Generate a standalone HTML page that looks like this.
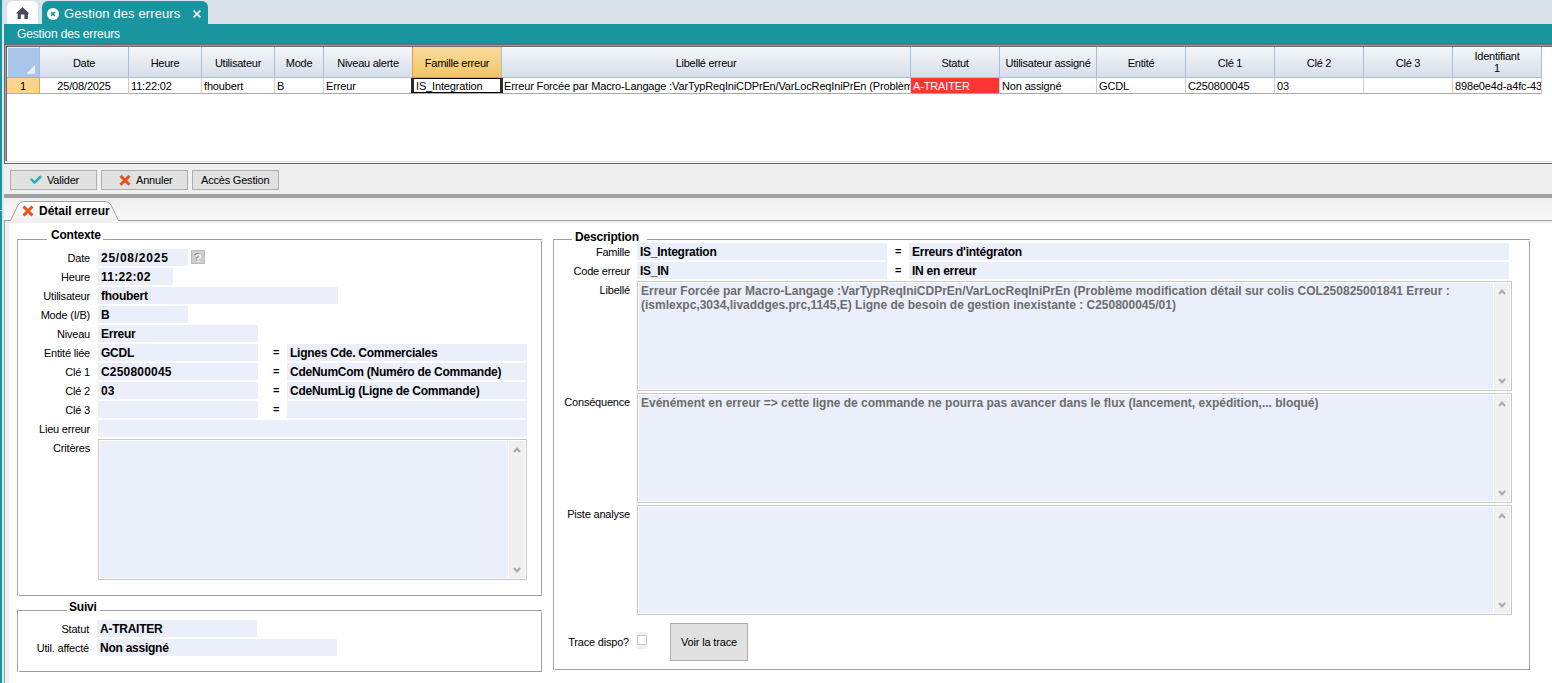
<!DOCTYPE html>
<html><head><meta charset="utf-8"><style>
*{margin:0;padding:0;box-sizing:border-box}
html,body{width:1552px;height:683px;overflow:hidden;background:#fff;font-family:"Liberation Sans",sans-serif;font-size:11px;color:#000}
div,span{position:absolute;white-space:nowrap}
.ttl{color:#fff}
.gh{top:47px;height:31px;background:linear-gradient(#ffffff 0,#ffffff 1px,#f3f6fa 1px,#d6dee9 100%);border-right:1px solid #a7bdd8;border-bottom:1px solid #a7bdd8;text-align:center;line-height:33px;font-size:11px;letter-spacing:-0.25px;overflow:hidden}
.gc{top:78px;height:16px;border-right:1px solid #cfcfcf;border-bottom:1px solid #a8a8a8;line-height:16px;font-size:11px;letter-spacing:-0.15px;padding-left:2px;overflow:hidden}
.btn{top:170px;height:20px;background:#e1e1e1;border:1px solid #adadad;font-size:11px;line-height:18px}
.gb{border:1px solid #a0a0a0}
.gbt{background:#fff;font-weight:bold;font-size:12px;letter-spacing:-0.2px;padding:0 2px;line-height:14px}
.lb{font-size:11px;letter-spacing:-0.2px;text-align:right;line-height:19px;height:17px}
.f{background:#eaeffa;height:17px;font-weight:bold;font-size:12px;letter-spacing:-0.25px;line-height:19px;padding-left:3px;overflow:hidden}
.ta{background:#eaeffa;border:1px solid #c8c8c8;box-shadow:inset 0 0 0 1px #fff;overflow:hidden}
.sb{top:1px;right:1px;bottom:1px;width:17px;background:#f0f0f0;border-left:1px solid #fff}
.sb svg{position:absolute;left:3px}
.num{letter-spacing:0.7px}
.eq{font-size:11px;font-weight:bold;line-height:17px}
.tat{left:3px;top:2px;font-weight:bold;font-size:12px;color:#6d6d6d;line-height:14px}
</style></head><body>
<div style="left:0px;top:0px;width:1552px;height:24px;background:#dbe3ea"></div>
<div style="left:0px;top:0px;width:2px;height:683px;background:#1995a0"></div>
<div style="left:2px;top:24px;width:2px;height:659px;background:#dfe7ee"></div>
<div style="left:0px;top:210px;width:2px;height:1px;background:#bde0e4"></div>
<div style="left:7px;top:1px;width:31px;height:23px;background:#fff;border-radius:6px 6px 0 0"></div>
<svg style="position:absolute;left:15px;top:6px" width="16" height="14" viewBox="0 0 16 14"><path d="M7.5 1 L14.4 7.6 L12.9 7.6 L12.9 12.9 L9.4 12.9 L9.4 8.6 L5.8 8.6 L5.8 12.9 L2.7 12.9 L2.7 7.6 L0.8 7.6 Z" fill="#474c5a"/></svg>
<div style="left:42px;top:1px;width:166px;height:23px;background:#1995a0;border-radius:6px 6px 0 0"></div>
<svg style="position:absolute;left:47px;top:8px" width="12" height="12" viewBox="0 0 12 12"><circle cx="6" cy="6" r="6" fill="#fff"/><path d="M4.1 4.1 L7.9 7.9 M7.9 4.1 L4.1 7.9" stroke="#1995a0" stroke-width="1.5"/></svg>
<div class="ttl" style="left:64px;top:5px;font-size:13px;line-height:17px;letter-spacing:0.12px">Gestion des erreurs</div>
<svg style="position:absolute;left:193px;top:10px" width="8" height="8" viewBox="0 0 8 8"><path d="M0.6 0.6 L7.4 7.4 M7.4 0.6 L0.6 7.4" stroke="#fff" stroke-width="1.5"/></svg>
<div style="left:4px;top:24px;width:1548px;height:20px;background:#1995a0"></div>
<div class="ttl" style="left:17px;top:26px;font-size:12px;line-height:16px;letter-spacing:-0.13px">Gestion des erreurs</div>
<div style="left:4px;top:44px;width:1548px;height:120px;background:#fff;border-top:1px solid #696969;border-left:1px solid #696969;border-bottom:1px solid #696969;box-shadow:inset 0 -1px 0 #fff,inset 0 -2px 0 #e3e3e3,inset 1px 1px 0 #a0a0a0,inset 2px 2px 0 #696969"></div>
<div style="left:7px;top:47px;width:33px;height:31px;background:#a9c5ea;border-right:1px solid #a7bdd8;border-bottom:1px solid #f0a040;box-shadow:inset 1px 1px 0 #e8f0fb"></div>
<svg style="position:absolute;left:26px;top:65px" width="9" height="9" viewBox="0 0 9 9"><path d="M9 0 L9 9 L0 9 Z" fill="#e8eef8"/></svg>
<div class="gh" style="left:40px;top:47px;width:89px;height:31px;">Date</div>
<div class="gc" style="left:40px;top:78px;width:89px;height:16px;text-align:center;padding-left:0;">25/08/2025</div>
<div class="gh" style="left:129px;top:47px;width:73px;height:31px;">Heure</div>
<div class="gc" style="left:129px;top:78px;width:73px;height:16px;">11:22:02</div>
<div class="gh" style="left:202px;top:47px;width:73px;height:31px;">Utilisateur</div>
<div class="gc" style="left:202px;top:78px;width:73px;height:16px;">fhoubert</div>
<div class="gh" style="left:275px;top:47px;width:49px;height:31px;">Mode</div>
<div class="gc" style="left:275px;top:78px;width:49px;height:16px;">B</div>
<div class="gh" style="left:324px;top:47px;width:89px;height:31px;border-right:1px solid #f39a33;">Niveau alerte</div>
<div class="gc" style="left:324px;top:78px;width:89px;height:16px;">Erreur</div>
<div class="gh" style="left:413px;top:47px;width:89px;height:31px;background:linear-gradient(#fadd9f,#f2c466);border-bottom:1px solid #f39a33;">Famille erreur</div>
<div class="gc" style="left:413px;top:78px;width:89px;height:16px;left:411px;width:92px;height:15px;border:1px solid #000;border-left:3px solid #2a2a2a;border-right:3px solid #2a2a2a;line-height:14px;padding-left:2px;">IS_Integration</div>
<div class="gh" style="left:502px;top:47px;width:409px;height:31px;">Libellé erreur</div>
<div class="gc" style="left:502px;top:78px;width:409px;height:16px;">Erreur Forcée par Macro-Langage :VarTypReqIniCDPrEn/VarLocReqIniPrEn (Problème modification détail sur colis COL250825001841 Erreur : (ismlexpc,3034,livaddges.prc,1145,E) Ligne de besoin de gestion inexistante : C250800045/01)</div>
<div class="gh" style="left:911px;top:47px;width:89px;height:31px;">Statut</div>
<div class="gc" style="left:911px;top:78px;width:89px;height:16px;background:#ff3535;color:#fff;">A-TRAITER</div>
<div class="gh" style="left:1000px;top:47px;width:97px;height:31px;">Utilisateur assigné</div>
<div class="gc" style="left:1000px;top:78px;width:97px;height:16px;">Non assigné</div>
<div class="gh" style="left:1097px;top:47px;width:89px;height:31px;">Entité</div>
<div class="gc" style="left:1097px;top:78px;width:89px;height:16px;">GCDL</div>
<div class="gh" style="left:1186px;top:47px;width:89px;height:31px;">Clé 1</div>
<div class="gc" style="left:1186px;top:78px;width:89px;height:16px;">C250800045</div>
<div class="gh" style="left:1275px;top:47px;width:89px;height:31px;">Clé 2</div>
<div class="gc" style="left:1275px;top:78px;width:89px;height:16px;">03</div>
<div class="gh" style="left:1364px;top:47px;width:89px;height:31px;">Clé 3</div>
<div class="gc" style="left:1364px;top:78px;width:89px;height:16px;"></div>
<div class="gh" style="left:1453px;top:47px;width:89px;height:31px;line-height:12px;padding-top:3px">Identifiant<br>1</div>
<div class="gc" style="left:1453px;top:78px;width:89px;height:16px;">898e0e4d-a4fc-4321-b2c1-aa</div>
<div style="left:411px;top:93px;width:92px;height:1px;background:#a8a8a8"></div>
<div class="gc" style="left:7px;top:78px;width:33px;height:16px;background:#fdd48e;border-right:1px solid #f0a040;border-bottom:1px solid #f0a040;text-align:center;padding:0;line-height:16px">1</div>
<div style="left:4px;top:164px;width:1548px;height:30px;background:#f0f0f0"></div>
<div class="btn" style="left:10px;top:170px;width:87px;height:20px;"></div>
<svg style="position:absolute;left:30px;top:175px" width="12" height="10" viewBox="0 0 12 10"><path d="M1.6 4.6 L4.5 7.6 L10.2 2" stroke="#2aaebb" stroke-width="2.6" stroke-linecap="round" stroke-linejoin="round" fill="none"/></svg>
<div style="left:47px;top:172px;font-size:11px;line-height:16px;letter-spacing:-0.2px">Valider</div>
<div class="btn" style="left:101px;top:170px;width:87px;height:20px;"></div>
<svg style="position:absolute;left:119px;top:174px" width="12" height="12" viewBox="0 0 12 12"><path d="M1.5 1.7 L10.5 10.7 M10.5 1.7 L1.5 10.7" stroke="#e8501e" stroke-width="3"/></svg>
<div style="left:136px;top:172px;font-size:11px;line-height:16px;letter-spacing:-0.2px">Annuler</div>
<div class="btn" style="left:192px;top:170px;width:87px;height:20px;"></div>
<div style="left:201px;top:172px;font-size:11px;line-height:16px;letter-spacing:-0.2px">Accès Gestion</div>
<div style="left:4px;top:194px;width:1548px;height:4px;background:#a0a0a0"></div>
<div style="left:4px;top:198px;width:1548px;height:23px;background:linear-gradient(#efefef,#f9f9f9)"></div>
<div style="left:4px;top:220px;width:1548px;height:1px;background:#a0a0a0"></div>
<div style="left:4px;top:221px;width:1px;height:462px;background:#a0a0a0"></div>
<svg style="position:absolute;left:9px;top:200px" width="112" height="23" viewBox="0 0 112 23"><defs><linearGradient id="tg" x1="0" y1="0" x2="0" y2="1"><stop offset="0" stop-color="#ffffff"/><stop offset="1" stop-color="#f0f0f0"/></linearGradient></defs><path d="M1.5 20.5 L9 5 Q11 1.5 15 1.5 L96.5 1.5 Q100 1.5 102 5 L109.5 20.5" fill="url(#tg)" stroke="#a0a0a0" stroke-width="1"/><rect x="2" y="20" width="107" height="3" fill="#f0f0f0"/></svg>
<svg style="position:absolute;left:22px;top:205px" width="12" height="12" viewBox="0 0 12 12"><path d="M1.5 1.5 L10.5 10.5 M10.5 1.5 L1.5 10.5" stroke="#e8501e" stroke-width="3"/></svg>
<div style="left:39px;top:203px;font-size:12px;font-weight:bold;line-height:16px">Détail erreur</div>
<div style="left:5px;top:221px;width:1547px;height:462px;background:#f0f0f0"></div>
<div style="left:9px;top:223px;width:1543px;height:460px;background:#fff"></div>
<div style="left:17px;top:239px;width:525px;height:1px;background:#a0a0a0"></div>
<div style="left:17px;top:239px;width:1px;height:357px;background:#a0a0a0"></div>
<div style="left:19px;top:595px;width:523px;height:1px;background:#a0a0a0"></div>
<div style="left:541px;top:241px;width:1px;height:355px;background:#a0a0a0"></div>
<div class="gbt" style="left:47px;top:228px;padding:0 2px 0 4px">Contexte</div>
<div class="lb" style="left:20px;top:249px;width:70px;height:17px;">Date</div>
<div class="f" style="left:98px;top:249px;width:90px;height:17px;"><span style="position:static;letter-spacing:0.75px">25/08/2025</span></div>
<div class="lb" style="left:20px;top:268px;width:70px;height:17px;">Heure</div>
<div class="f" style="left:98px;top:268px;width:75px;height:17px;"><span style="position:static;letter-spacing:0.28px">11:22:02</span></div>
<div class="lb" style="left:20px;top:287px;width:70px;height:17px;">Utilisateur</div>
<div class="f" style="left:98px;top:287px;width:240px;height:17px;">fhoubert</div>
<div class="lb" style="left:20px;top:306px;width:70px;height:17px;">Mode (I/B)</div>
<div class="f" style="left:98px;top:306px;width:90px;height:17px;">B</div>
<div class="lb" style="left:20px;top:325px;width:70px;height:17px;">Niveau</div>
<div class="f" style="left:98px;top:325px;width:160px;height:17px;">Erreur</div>
<div class="lb" style="left:20px;top:344px;width:70px;height:17px;">Entité liée</div>
<div class="f" style="left:98px;top:344px;width:160px;height:17px;">GCDL</div>
<div class="lb" style="left:20px;top:363px;width:70px;height:17px;">Clé 1</div>
<div class="f" style="left:98px;top:363px;width:160px;height:17px;"><span style="position:static;letter-spacing:0.2px">C250800045</span></div>
<div class="lb" style="left:20px;top:382px;width:70px;height:17px;">Clé 2</div>
<div class="f" style="left:98px;top:382px;width:160px;height:17px;"><span style="position:static;letter-spacing:0.2px">03</span></div>
<div class="lb" style="left:20px;top:401px;width:70px;height:17px;">Clé 3</div>
<div class="f" style="left:98px;top:401px;width:160px;height:17px;"></div>
<div class="lb" style="left:20px;top:420px;width:70px;height:17px;">Lieu erreur</div>
<div class="f" style="left:98px;top:420px;width:429px;height:17px;"></div>
<div class="eq" style="left:273px;top:344px;">=</div>
<div class="f" style="left:287px;top:344px;width:240px;height:17px;">Lignes Cde. Commerciales</div>
<div class="eq" style="left:273px;top:363px;">=</div>
<div class="f" style="left:287px;top:363px;width:240px;height:17px;">CdeNumCom (Numéro de Commande)</div>
<div class="eq" style="left:273px;top:382px;">=</div>
<div class="f" style="left:287px;top:382px;width:240px;height:17px;">CdeNumLig (Ligne de Commande)</div>
<div class="eq" style="left:273px;top:401px;">=</div>
<div class="f" style="left:287px;top:401px;width:240px;height:17px;"></div>
<div style="left:191px;top:250px;width:14px;height:14px;background:#cecece;border:1px solid #bcbcbc;color:#fff;font-weight:bold;font-size:11px;line-height:14px;text-align:center;text-shadow:-1px -1px 0 #8c8c8c">?</div>
<div class="lb" style="left:20px;top:439px;width:70px;height:17px;">Critères</div>
<div class="ta" style="left:98px;top:439px;width:429px;height:141px;"><div class="sb"><svg style="top:5px" width="10" height="7" viewBox="0 0 10 7"><path d="M2 6 L5 2.6 L8 6" stroke="#a8a8a8" stroke-width="2" fill="none"/></svg><svg style="bottom:4px" width="10" height="7" viewBox="0 0 10 7"><path d="M2 1 L5 4.4 L8 1" stroke="#a8a8a8" stroke-width="2" fill="none"/></svg></div></div>
<div style="left:17px;top:610px;width:525px;height:1px;background:#a0a0a0"></div>
<div style="left:17px;top:610px;width:1px;height:62px;background:#a0a0a0"></div>
<div style="left:19px;top:671px;width:523px;height:1px;background:#a0a0a0"></div>
<div style="left:541px;top:612px;width:1px;height:60px;background:#a0a0a0"></div>
<div class="gbt" style="left:67px;top:600px;padding:0 3px 0 2px">Suivi</div>
<div class="lb" style="left:19px;top:620px;width:70px;height:17px;">Statut</div>
<div class="f" style="left:97px;top:620px;width:160px;height:17px;">A-TRAITER</div>
<div class="lb" style="left:19px;top:639px;width:70px;height:17px;">Util. affecté</div>
<div class="f" style="left:97px;top:639px;width:240px;height:17px;">Non assigné</div>
<div style="left:553px;top:239px;width:977px;height:1px;background:#a0a0a0"></div>
<div style="left:553px;top:239px;width:1px;height:431px;background:#a0a0a0"></div>
<div style="left:555px;top:669px;width:975px;height:1px;background:#a0a0a0"></div>
<div style="left:1529px;top:241px;width:1px;height:429px;background:#a0a0a0"></div>
<div class="gbt" style="left:572px;top:230px;padding:0 8px 0 3px">Description</div>
<div class="lb" style="left:540px;top:243px;width:90px;height:17px;">Famille</div>
<div class="f" style="left:637px;top:243px;width:250px;height:17px;">IS_Integration</div>
<div class="eq" style="left:895px;top:243px;">=</div>
<div class="f" style="left:909px;top:243px;width:600px;height:17px;">Erreurs d'intégraton</div>
<div class="lb" style="left:540px;top:262px;width:90px;height:17px;">Code erreur</div>
<div class="f" style="left:637px;top:262px;width:250px;height:17px;">IS_IN</div>
<div class="eq" style="left:895px;top:262px;">=</div>
<div class="f" style="left:909px;top:262px;width:600px;height:17px;">IN en erreur</div>
<div class="lb" style="left:540px;top:281px;width:90px;height:17px;">Libellé</div>
<div class="ta" style="left:637px;top:281px;width:875px;height:110px;"><div class="tat">Erreur Forcée par Macro-Langage :VarTypReqIniCDPrEn/VarLocReqIniPrEn (Problème modification détail sur colis COL250825001841 Erreur :<br>(ismlexpc,3034,livaddges.prc,1145,E) Ligne de besoin de gestion inexistante : C250800045/01)</div><div class="sb"><svg style="top:5px" width="10" height="7" viewBox="0 0 10 7"><path d="M2 6 L5 2.6 L8 6" stroke="#a8a8a8" stroke-width="2" fill="none"/></svg><svg style="bottom:4px" width="10" height="7" viewBox="0 0 10 7"><path d="M2 1 L5 4.4 L8 1" stroke="#a8a8a8" stroke-width="2" fill="none"/></svg></div></div>
<div class="lb" style="left:540px;top:393px;width:90px;height:17px;">Conséquence</div>
<div class="ta" style="left:637px;top:393px;width:875px;height:110px;"><div class="tat">Evénément en erreur =&gt; cette ligne de commande ne pourra pas avancer dans le flux (lancement, expédition,... bloqué)</div><div class="sb"><svg style="top:5px" width="10" height="7" viewBox="0 0 10 7"><path d="M2 6 L5 2.6 L8 6" stroke="#a8a8a8" stroke-width="2" fill="none"/></svg><svg style="bottom:4px" width="10" height="7" viewBox="0 0 10 7"><path d="M2 1 L5 4.4 L8 1" stroke="#a8a8a8" stroke-width="2" fill="none"/></svg></div></div>
<div class="lb" style="left:540px;top:505px;width:90px;height:17px;">Piste analyse</div>
<div class="ta" style="left:637px;top:505px;width:875px;height:110px;"><div class="sb"><svg style="top:5px" width="10" height="7" viewBox="0 0 10 7"><path d="M2 6 L5 2.6 L8 6" stroke="#a8a8a8" stroke-width="2" fill="none"/></svg><svg style="bottom:4px" width="10" height="7" viewBox="0 0 10 7"><path d="M2 1 L5 4.4 L8 1" stroke="#a8a8a8" stroke-width="2" fill="none"/></svg></div></div>
<div class="lb" style="left:539px;top:633px;width:90px;height:17px;">Trace dispo?</div>
<div style="left:637px;top:632px;width:10px;height:17px;background:#eaeffa"></div>
<div style="left:637px;top:635px;width:10px;height:10px;background:#fff;border:1px solid #c8c8c8"></div>
<div style="left:670px;top:623px;width:78px;height:38px;background:#e1e1e1;border:1px solid #adadad;text-align:center;line-height:36px;letter-spacing:-0.15px">Voir la trace</div>
</body></html>
